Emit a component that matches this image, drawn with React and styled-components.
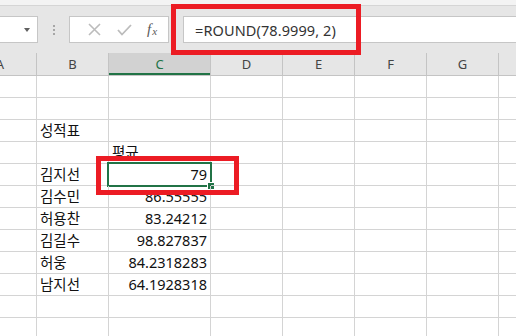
import React from "react";
import styled, { createGlobalStyle } from "styled-components";

const GlobalStyle = createGlobalStyle`
  html, body {
    margin: 0;
    padding: 0;
    background: #ffffff;
    overflow: hidden;
  }
  body {
    width: 516px;
    height: 336px;
    position: relative;
    font-family: "Noto Sans", "Noto Sans CJK KR", sans-serif;
  }
`;

const TopStrip = styled.div`
  height: 5px;
  background: #f3f3f3;
  border-bottom: 1px solid #d5d5d5;
`;

const Toolbar = styled.div`
  height: 47px;
  box-sizing: border-box;
  background: #e6e6e6;
  display: flex;
  align-items: flex-start;
  padding-top: 10px;
`;

const Box = styled.div`
  height: 27px;
  box-sizing: border-box;
  background: #ffffff;
  border: 1px solid #c6c6c6;
  display: flex;
  align-items: center;
`;

const NameBox = styled(Box)`
  width: 38px;
  border-left: none;
  justify-content: flex-end;
  padding-right: 7px;
`;

const Arrow = styled.span`
  width: 0;
  height: 0;
  border-left: 3.5px solid transparent;
  border-right: 3.5px solid transparent;
  border-top: 4px solid #606060;
`;

const Grip = styled.div`
  width: 31px;
  height: 27px;
  display: flex;
  flex-direction: column;
  align-items: center;
  justify-content: center;
  gap: 2px;
`;

const Dot = styled.span`
  width: 2px;
  height: 2px;
  background: #a6a6a6;
`;

const ButtonsBox = styled(Box)`
  width: 100px;
  justify-content: space-between;
  padding: 0 6px 0 12px;
`;

const Mark = styled.span`
  width: 24px;
  display: flex;
  justify-content: center;
  color: #bcbcbc;
`;

const Fx = styled.span`
  font-family: "Liberation Serif", serif;
  font-style: italic;
  color: #5a5a5a;
  font-size: 15px;
  width: 20px;
  display: flex;
  align-items: baseline;
  justify-content: center;
  & > small {
    font-size: 11px;
    margin-left: 1px;
    position: relative;
    top: 1px;
  }
`;

const FormulaBox = styled(Box)`
  flex: 1;
  margin-left: 14px;
  border-right: none;
  padding-left: 11px;
  font-family: "Noto Sans", sans-serif;
  font-size: 14.5px;
  color: #333333;
  letter-spacing: 0.1px;
`;

const Sheet = styled.div`
  overflow: hidden;
`;

const Grid = styled.div`
  margin-left: -36px;
  display: grid;
  grid-template-columns: 73px 72px 102px 72px 72px 72px 72px 100px;
`;

const Head = styled.div`
  height: 23px;
  box-sizing: border-box;
  background: ${(p) => (p.$active ? "#d2d2d2" : "#e6e6e6")};
  border-right: 1px solid #c4c4c4;
  border-bottom: 1px solid #c4c4c4;
  box-shadow: ${(p) => (p.$active ? "inset 0 -2px 0 #217346" : "none")};
  color: ${(p) => (p.$active ? "#217346" : "#444444")};
  font-size: 13px;
  display: flex;
  align-items: center;
  justify-content: center;
  padding-bottom: 1px;
`;

const Cell = styled.div`
  position: relative;
  height: 22px;
  box-sizing: border-box;
  border-right: 1px solid #d4d4d4;
  border-bottom: 1px solid #d4d4d4;
  display: flex;
  align-items: flex-end;
  justify-content: ${(p) => (p.$num ? "flex-end" : "flex-start")};
  padding: 0 3px 1px 3px;
  font-family: ${(p) =>
    p.$num ? '"Noto Sans", sans-serif' : '"Noto Sans CJK KR", sans-serif'};
  font-size: 14.5px;
  line-height: 20px;
  color: #111111;
  white-space: nowrap;
`;

const Selection = styled.div`
  position: absolute;
  left: -2px;
  top: -2px;
  width: 105px;
  height: 25px;
  box-sizing: border-box;
  border: 2px solid #217346;
  pointer-events: none;
`;

const Handle = styled.span`
  position: absolute;
  right: -5px;
  bottom: -5px;
  width: 6px;
  height: 6px;
  background: #217346;
  border: 1px solid #ffffff;
`;

const RedBox = styled.div`
  position: absolute;
  box-sizing: border-box;
  border: 5px solid #ec1c24;
  pointer-events: none;
`;

const columns = ["A", "B", "C", "D", "E", "F", "G", ""];

const rows = [
  ["", ""],
  ["", ""],
  ["성적표", ""],
  ["", "평균", true],
  ["김지선", "79"],
  ["김수민", "86.55555"],
  ["허용찬", "83.24212"],
  ["김길수", "98.827837"],
  ["허웅", "84.2318283"],
  ["남지선", "64.1928318"],
  ["", ""],
  ["", ""],
];

const App = () => {
  return (
    <>
      <GlobalStyle />
      <TopStrip />
      <Toolbar>
        <NameBox>
          <Arrow />
        </NameBox>
        <Grip>
          <Dot />
          <Dot />
          <Dot />
        </Grip>
        <ButtonsBox>
          <Mark>
            <svg width="13" height="13" viewBox="0 0 13 13">
              <path d="M1 1 L12 12 M12 1 L1 12" stroke="#bcbcbc" strokeWidth="1.6" fill="none" />
            </svg>
          </Mark>
          <Mark>
            <svg width="15" height="12" viewBox="0 0 15 12">
              <path d="M1 6 L5 10.5 L14 1" stroke="#bcbcbc" strokeWidth="1.8" fill="none" />
            </svg>
          </Mark>
          <Fx>
            f<small>x</small>
          </Fx>
        </ButtonsBox>
        <FormulaBox>=ROUND(78.9999, 2)</FormulaBox>
      </Toolbar>
      <Sheet>
        <Grid>
          {columns.map((c, i) => (
            <Head key={i} $active={c === "C"}>
              {c}
            </Head>
          ))}
          {rows.map((r, i) => (
            <React.Fragment key={i}>
              <Cell />
              <Cell>{r[0]}</Cell>
              <Cell $num={!r[2]}>
                {r[1]}
                {i === 4 && (
                  <Selection>
                    <Handle />
                  </Selection>
                )}
              </Cell>
              <Cell />
              <Cell />
              <Cell />
              <Cell />
              <Cell />
            </React.Fragment>
          ))}
        </Grid>
      </Sheet>
      <RedBox style={{ left: 171, top: 4, width: 190, height: 51 }} />
      <RedBox style={{ left: 96, top: 156, width: 143, height: 39 }} />
    </>
  );
};

export default App;
